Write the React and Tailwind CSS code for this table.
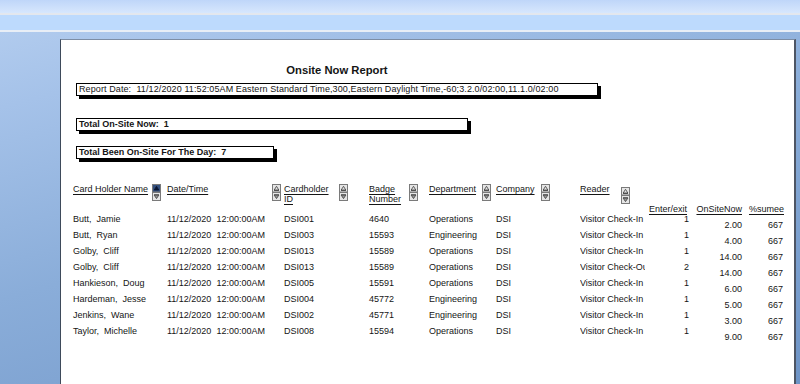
import React from 'react'

const rows = [
    { name: 'Butt,  Jamie', id: 'DSI001', badge: '4640', dept: 'Operations', reader: 'Visitor Check-In', ee: '1', now: '2.00' },
    { name: 'Butt,  Ryan', id: 'DSI003', badge: '15593', dept: 'Engineering', reader: 'Visitor Check-In', ee: '1', now: '4.00' },
    { name: 'Golby,  Cliff', id: 'DSI013', badge: '15589', dept: 'Operations', reader: 'Visitor Check-In', ee: '1', now: '14.00' },
    { name: 'Golby,  Cliff', id: 'DSI013', badge: '15589', dept: 'Operations', reader: 'Visitor Check-Out', ee: '2', now: '14.00' },
    { name: 'Hankieson,  Doug', id: 'DSI005', badge: '15591', dept: 'Operations', reader: 'Visitor Check-In', ee: '1', now: '6.00' },
    { name: 'Hardeman,  Jesse', id: 'DSI004', badge: '45772', dept: 'Engineering', reader: 'Visitor Check-In', ee: '1', now: '5.00' },
    { name: 'Jenkins,  Wane', id: 'DSI002', badge: '45771', dept: 'Engineering', reader: 'Visitor Check-In', ee: '1', now: '3.00' },
    { name: 'Taylor,  Michelle', id: 'DSI008', badge: '15594', dept: 'Operations', reader: 'Visitor Check-In', ee: '1', now: '9.00' },
]

function SortIcon({ active }) {
    return (
        <svg width="9" height="17" viewBox="0 0 9 17" className="block">
            <rect x="0.5" y="0.5" width="8" height="7.5" fill={active ? '#34507e' : '#e6e6e6'} stroke="#7a7a7a" />
            <polygon points="2.2,6 4.5,2.3 6.8,6" fill={active ? '#0b1733' : 'none'} stroke={active ? '#0b1733' : '#3a3a3a'} strokeWidth="0.8" />
            {!active && <line x1="2" y1="6.5" x2="7" y2="6.5" stroke="#3a3a3a" strokeWidth="0.8" />}
            <rect x="0.5" y="8.5" width="8" height="8" fill="#e6e6e6" stroke="#7a7a7a" />
            <line x1="2" y1="10.7" x2="7" y2="10.7" stroke="#3a3a3a" strokeWidth="0.8" />
            <polygon points="2.2,11.2 4.5,14.6 6.8,11.2" fill="#9a9a9a" stroke="#3a3a3a" strokeWidth="0.8" />
        </svg>
    )
}

function App() {
    return (
        <div className="w-[800px] h-[384px] overflow-hidden bg-[linear-gradient(165deg,#b6cff0_0%,#a5c2e9_18%,#8aadd9_50%,#6e94c6_100%)] font-['Liberation_Sans',Arial,sans-serif] text-[#151515]">
            {/* ribbon strips */}
            <div className="h-[13px] bg-[linear-gradient(to_bottom,#bfd6f9,#d7e7fd)]"></div>
            <div className="h-[2px] bg-[#e3e7ee]"></div>
            <div className="h-[15px] bg-[#bddafd]"></div>
            <div className="h-[2px] bg-[#e8eef6]"></div>

            <div className="pl-[60px] pt-[7px] pr-[4px]">
                <div className="h-[360px] bg-white border-l border-t border-r-2 border-l-[#3e4a5a] border-t-[#7d8da4] border-r-[#4d5564] pl-[15px] pt-[23px]">
                    <div className="w-[522px] text-center font-bold text-[11.25px] leading-[14px]">Onsite Now Report</div>

                    <div className="mt-[6px] w-[522px] h-[13px] border border-black shadow-[3px_3px_0_#000] pl-[2px] text-[9px] tracking-[0.1px] leading-[11px] whitespace-pre">
                        Report Date:  11/12/2020 11:52:05AM Eastern Standard Time,300,Eastern Daylight Time,-60;3.2.0/02:00,11.1.0/02:00
                    </div>

                    <div className="mt-[22px] w-[392px] h-[13px] border border-black shadow-[3px_3px_0_#000] pl-[2px] font-bold text-[9px] leading-[11px] whitespace-pre">
                        Total On-Site Now:  1
                    </div>

                    <div className="mt-[15px] w-[198px] h-[13px] border border-black shadow-[3px_3px_0_#000] pl-[2px] font-bold text-[9px] leading-[11px] whitespace-pre">
                        Total Been On-Site For The Day:  7
                    </div>

                    {/* column headers */}
                    <div className="ml-[-3px] mt-[25px] h-[27px] flex items-start text-[9px] leading-[10px]">
                        <div className="w-[79px] underline underline-offset-2">Card Holder Name</div>
                        <div className="w-[15px]"><SortIcon active /></div>
                        <div className="w-[105px] underline underline-offset-2">Date/Time</div>
                        <div className="w-[12px]"><SortIcon /></div>
                        <div className="w-[55px] underline underline-offset-2">Cardholder<br />ID</div>
                        <div className="w-[30px]"><SortIcon /></div>
                        <div className="w-[40px] underline underline-offset-2">Badge<br />Number</div>
                        <div className="w-[20px]"><SortIcon /></div>
                        <div className="w-[53px] underline underline-offset-2">Department</div>
                        <div className="w-[14px]"><SortIcon /></div>
                        <div className="w-[45px] underline underline-offset-2">Company</div>
                        <div className="w-[39px]"><SortIcon /></div>
                        <div className="w-[41px] underline underline-offset-2">Reader</div>
                        <div className="w-[24px] mt-[3px]"><SortIcon /></div>
                        <div className="w-[45px] mt-[20px] pr-[3px] text-right underline underline-offset-2">Enter/exit</div>
                        <div className="w-[52px] mt-[20px] text-right underline underline-offset-2">OnSiteNow</div>
                        <div className="w-[42px] mt-[20px] text-right underline underline-offset-2">%sumee</div>
                    </div>

                    {/* rows */}
                    <div className="ml-[-3px] text-[9px] leading-[16px]">
                        {rows.map((r, i) => (
                            <div key={i} className="flex h-[16px]">
                                <div className="w-[94px] whitespace-pre">{r.name}</div>
                                <div className="w-[117px] whitespace-pre">11/12/2020  12:00:00AM</div>
                                <div className="w-[85px]">{r.id}</div>
                                <div className="w-[60px]">{r.badge}</div>
                                <div className="w-[67px]">{r.dept}</div>
                                <div className="w-[84px]">DSI</div>
                                <div className="w-[65px] overflow-hidden whitespace-nowrap">{r.reader}</div>
                                <div className="w-[45px] pr-[1px] text-right">{r.ee}</div>
                                <div className="w-[52px] text-right translate-y-[6px]">{r.now}</div>
                                <div className="w-[41px] text-right translate-y-[6px]">667</div>
                            </div>
                        ))}
                    </div>
                </div>
            </div>
        </div>
    )
}

export default App
